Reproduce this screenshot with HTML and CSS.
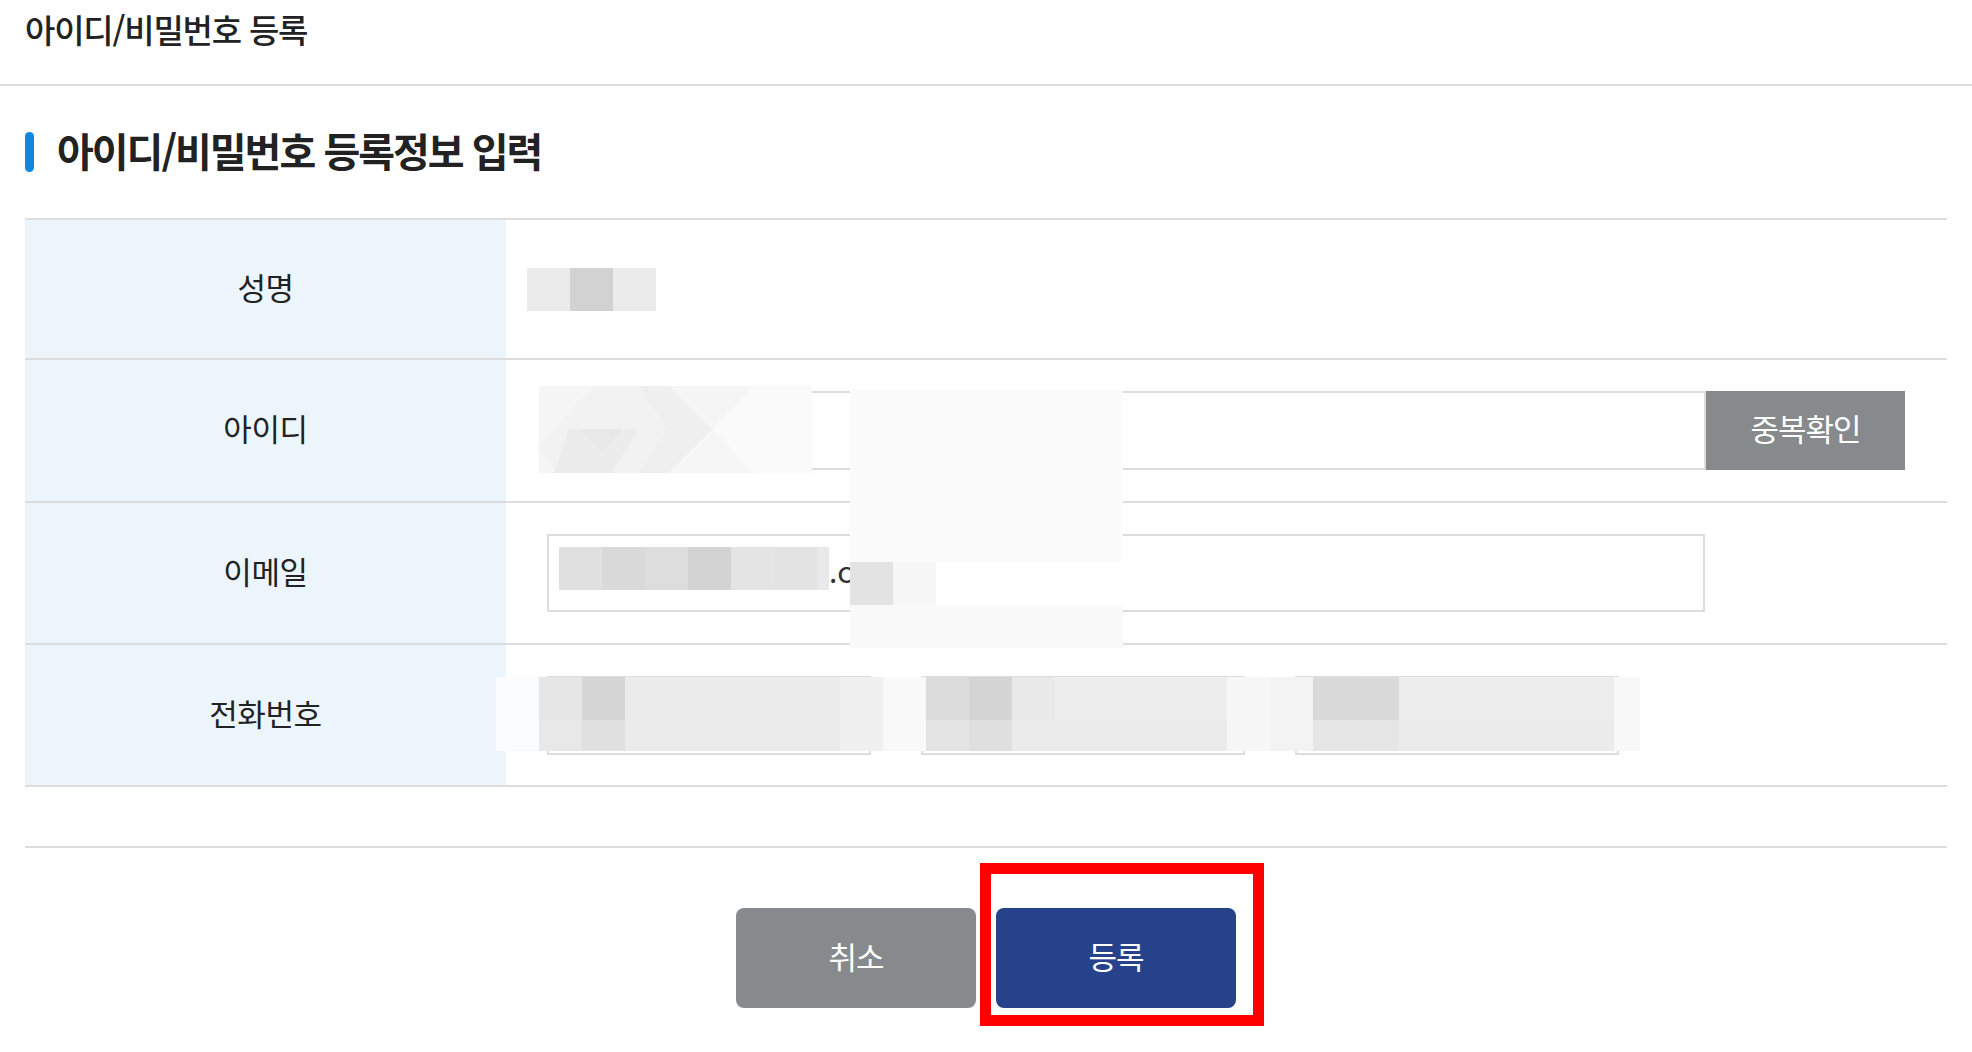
FILE: index.html
```html
<!DOCTYPE html>
<html lang="ko">
<head>
<meta charset="utf-8">
<title>아이디/비밀번호 등록</title>
<link rel="stylesheet" href="styles.css">
</head>
<body>
<header class="page-head">
  <h1 class="page-title">아이디/비밀번호 등록</h1>
</header>
<main class="content">
  <h2 class="section-title"><span class="section-bar"></span>아이디/비밀번호 등록정보 입력</h2>

  <div class="form-table">
    <div class="row row-name">
      <div class="label">성명</div>
      <div class="value">
        <span class="blur-name"><i class="c1"></i><i class="c2"></i><i class="c1"></i></span>
      </div>
    </div>
    <div class="row row-id">
      <div class="label">아이디</div>
      <div class="value">
        <div class="input input-id"></div>
        <button class="btn-check" type="button">중복확인</button>
        <svg class="id-mask" width="273" height="87" viewBox="0 0 273 87" aria-hidden="true">
          <rect width="273" height="87" fill="#f2f2f2"/>
          <polygon points="0,0 55,0 0,60" fill="#f5f5f5"/>
          <polygon points="0,87 0,62 18,87" fill="#f5f5f5"/>
          <polygon points="30,43 100,43 72,87 15,87" fill="#ececec"/>
          <polygon points="42,43 84,43 63,66" fill="#e9e9e9"/>
          <polygon points="100,0 130,0 173,43 130,87 100,87 128,43" fill="#efefef"/>
          <polygon points="130,0 214,0 173,43" fill="#f5f5f5"/>
          <polygon points="130,87 214,87 173,43" fill="#f6f6f6"/>
          <polygon points="173,43 214,0 273,0 273,87 214,87" fill="#fafafa"/>
        </svg>
      </div>
    </div>
    <div class="row">
      <div class="label">이메일</div>
      <div class="value">
        <div class="input input-email">
          <span class="blur-email"><i class="e1"></i><i class="e2"></i><i class="e3"></i><i class="e4"></i><i class="e5"></i><i class="e6"></i><i class="e7"></i></span><span class="email-text">.com</span>
        </div>
      </div>
    </div>
    <div class="row">
      <div class="label">전화번호</div>
      <div class="value value-phone">
        <div class="input input-phone"></div>
        <div class="input input-phone"></div>
        <div class="input input-phone"></div>
        <div class="phone-mask"></div>
      </div>
    </div>

    <div class="mask-block">
      <div class="mask-top"></div>
      <div class="mask-mid"><i class="m1"></i><i class="m2"></i><i class="m3"></i></div>
      <div class="mask-bottom"></div>
    </div>
  </div>

  <div class="spacer-line"></div>

  <div class="actions">
    <button class="btn btn-gray" type="button">취소</button>
    <span class="btn-wrap">
      <button class="btn btn-blue" type="button">등록</button>
      <span class="highlight"></span>
    </span>
  </div>
</main>
</body>
</html>
```

FILE: styles.css
```css
* { box-sizing: border-box; }

html, body {
  margin: 0;
  padding: 0;
  background: #ffffff;
}

body {
  width: 1972px;
  height: 1052px;
  overflow: hidden;
  font-family: "Noto Sans CJK KR", "Noto Sans", sans-serif;
  color: #222222;
}

.page-head {
  height: 86px;
  border-bottom: 2px solid #dddddd;
  padding: 0 25px;
}

.page-title {
  margin: 0;
  padding-top: 11px;
  font-size: 33px;
  line-height: 36px;
  font-weight: 500;
  letter-spacing: -1.2px;
  color: #222222;
}

.content {
  padding: 0 25px;
}

.section-title {
  display: flex;
  align-items: center;
  height: 40px;
  margin: 44px 0 48px;
  font-size: 40px;
  line-height: 40px;
  font-weight: 700;
  letter-spacing: -2px;
  color: #222222;
}

.section-bar {
  width: 9px;
  height: 40px;
  border-radius: 5px;
  background: #0d87e2;
  margin-top: 4px;
  margin-right: 23px;
  flex: none;
}

.form-table {
  position: relative;
  border-top: 2px solid #dddddd;
}

.row {
  display: flex;
  height: 142px;
  border-bottom: 2px solid #dddddd;
}

.row-name { height: 140px; }
.row-id { height: 143px; }

.label {
  width: 481px;
  flex: none;
  background: #edf5fc;
  display: flex;
  align-items: center;
  justify-content: center;
  padding-bottom: 6px;
  font-size: 31px;
  letter-spacing: -0.4px;
  color: #222222;
}

.value {
  position: relative;
  flex: 1;
  display: flex;
  align-items: center;
  padding-left: 21px;
}

.blur-name {
  display: flex;
  height: 43px;
}

.blur-name i,
.blur-email i {
  display: block;
  width: 43px;
  height: 43px;
}

.blur-name .c1 { background: #ebebeb; }
.blur-name .c2 { background: #d2d2d2; }

.input {
  border: 2px solid #dddddd;
  background: #ffffff;
}

.input-id {
  margin-left: 20px;
  width: 1159px;
  height: 79px;
}

.btn-check {
  width: 199px;
  height: 79px;
  border: 0;
  margin: 0;
  padding: 0 0 6px;
  background: #868a8d;
  color: #ffffff;
  font-family: inherit;
  font-size: 31px;
  letter-spacing: -1px;
}

.id-mask {
  position: absolute;
  left: 33px;
  top: 26px;
}

.input-email {
  margin-left: 20px;
  width: 1158px;
  height: 78px;
  display: flex;
  align-items: flex-start;
  padding: 11px 0 0 10px;
}

.blur-email {
  display: flex;
}

.blur-email .e1 { background: #e0e0e0; }
.blur-email .e2 { background: #d9d9d9; }
.blur-email .e3 { background: #dddddd; }
.blur-email .e4 { background: #d3d3d3; }
.blur-email .e5 { background: #e4e4e4; }
.blur-email .e6 { background: #e3e3e3; }
.blur-email .e7 { background: #e9e9e9; width: 12px; }

.email-text {
  font-size: 30px;
  line-height: 43px;
  margin-top: 2px;
  color: #333333;
}

.value-phone {
  gap: 50px;
}

.input-phone {
  width: 324px;
  height: 79px;
}

.input-phone:first-child {
  margin-left: 20px;
}

.phone-mask {
  position: absolute;
  left: -10px;
  top: 32px;
  width: 1144px;
  height: 74px;
  background:
    linear-gradient(to right,
      #fbfcfd 0 43px, #e6e6e6 43px 86px, #d6d6d6 86px 129px, #ececec 129px 344px,
      #f0f0f0 344px 387px, #f9f9f9 387px 430px, #dcdcdc 430px 473px, #d4d4d4 473px 516px,
      #e9e9e9 516px 559px, #ededed 559px 731px, #f7f7f7 731px 774px, #f3f3f3 774px 817px,
      #d9d9d9 817px 860px, #dadada 860px 903px, #ededed 903px 1118px, #f8f8f8 1118px) top left / 100% 43px no-repeat,
    linear-gradient(to right,
      #fbfcfd 0 43px, #e8e8e8 43px 86px, #e0e0e0 86px 129px, #ebebeb 129px 344px,
      #f0f0f0 344px 387px, #f9f9f9 387px 430px, #e4e4e4 430px 473px, #dfdfdf 473px 516px,
      #ebebeb 516px 731px, #f7f7f7 731px 774px, #f3f3f3 774px 817px,
      #e6e6e6 817px 903px, #ebebeb 903px 1118px, #f8f8f8 1118px) bottom left / 100% 31px no-repeat;
}

.mask-block {
  position: absolute;
  left: 825px;
  top: 170px;
  width: 273px;
}

.mask-top {
  height: 172px;
  background: #fbfbfb;
}

.mask-mid {
  display: flex;
  height: 43px;
}

.mask-mid i {
  display: block;
  width: 43px;
  height: 43px;
}

.mask-mid .m1 { background: #e3e3e3; }
.mask-mid .m2 { background: #f7f7f7; }
.mask-mid .m3 { flex: 1; background: #ffffff; }

.mask-bottom {
  height: 43px;
  background: #f9f9f9;
}

.spacer-line {
  height: 61px;
  border-bottom: 2px solid #dddddd;
}

.actions {
  display: flex;
  justify-content: center;
  gap: 20px;
  padding-top: 60px;
}

.btn {
  width: 240px;
  height: 100px;
  border: 0;
  border-radius: 8px;
  color: #ffffff;
  font-family: inherit;
  font-size: 31px;
  letter-spacing: -1px;
  padding: 0 0 6px;
}

.btn-gray { background: #868a8d; }
.btn-blue { background: #26428b; }

.btn-wrap {
  position: relative;
  display: block;
}

.highlight {
  position: absolute;
  left: -16px;
  top: -45px;
  width: 284px;
  height: 163px;
  border: 11px solid #ff0000;
  pointer-events: none;
}
```
